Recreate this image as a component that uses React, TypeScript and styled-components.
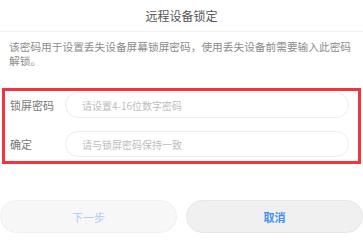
import React from 'react';
import styled, { createGlobalStyle } from 'styled-components';

const GlobalStyle = createGlobalStyle`
  html, body {
    margin: 0;
    padding: 0;
    background: #ffffff;
  }
  body {
    font-family: "Noto Sans CJK SC", "Noto Sans", sans-serif;
  }
`;

const Page = styled.div`
  width: 363px;
  height: 237px;
  display: flex;
  flex-direction: column;
  overflow: hidden;
`;

const Header = styled.div`
  height: 31px;
  display: flex;
  align-items: center;
  justify-content: center;
  border-bottom: 1px solid #f2f2f2;
  font-size: 12px;
  color: #555;
`;

const Description = styled.p`
  margin: 0;
  padding: 8px 8px 0 9px;
  font-size: 10.7px;
  line-height: 14px;
  color: #8c8c8c;
  height: 48px;
`;

const FormBox = styled.div`
  margin: 0 2px;
  border: 3px solid #f5333f;
  padding: 1px 9px 4px 4px;
  display: flex;
  flex-direction: column;
  gap: 13px;
`;

const Row = styled.div`
  display: flex;
  align-items: center;
`;

const Label = styled.span`
  width: 55px;
  padding-left: 1px;
  font-size: 11px;
  color: #777;
`;

const Input = styled.div`
  flex: 1;
  height: 24px;
  border: 1px solid #ececec;
  border-radius: 13px;
  display: flex;
  align-items: center;
  padding-left: 16px;
  font-size: 10px;
  color: #bdbdbd;
`;

const Footer = styled.div`
  margin-top: 36px;
  display: flex;
  gap: 9px;
`;

const Button = styled.div<{ primary?: boolean }>`
  flex: 1;
  height: 31px;
  border-radius: 17px;
  display: flex;
  align-items: center;
  justify-content: center;
  font-size: 11px;
  background: ${({ primary }) => (primary ? '#f0f0f0' : '#f7f7f7')};
  border: 1px solid ${({ primary }) => (primary ? '#e6e6e6' : '#f0f0f0')};
  color: ${({ primary }) => (primary ? '#3d8ff0' : '#a9cdf6')};
  font-weight: ${({ primary }) => (primary ? 700 : 400)};
`;

const App: React.FC = () => {
  return (
    <Page>
      <GlobalStyle />
      <Header>远程设备锁定</Header>
      <Description>
        该密码用于设置丢失设备屏幕锁屏密码，使用丢失设备前需要输入此密码解锁。
      </Description>
      <FormBox>
        <Row>
          <Label>锁屏密码</Label>
          <Input>请设置4-16位数字密码</Input>
        </Row>
        <Row>
          <Label>确定</Label>
          <Input>请与锁屏密码保持一致</Input>
        </Row>
      </FormBox>
      <Footer>
        <Button>下一步</Button>
        <Button primary>取消</Button>
      </Footer>
    </Page>
  );
};

export default App;
